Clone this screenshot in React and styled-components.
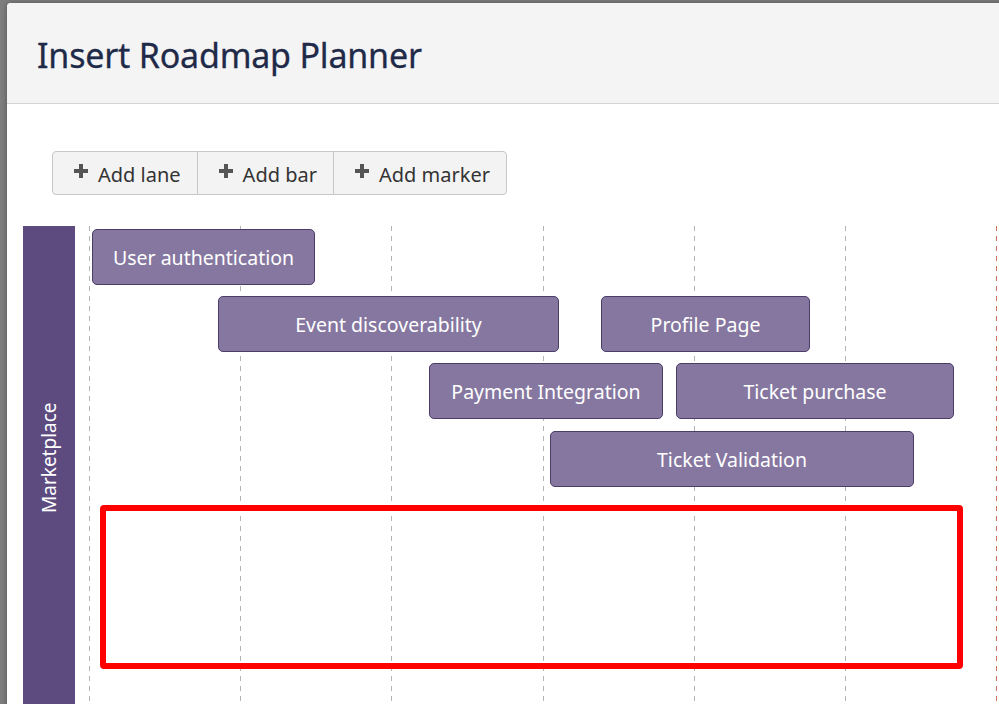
import React from 'react';
import styled, { createGlobalStyle } from 'styled-components';

const GlobalStyle = createGlobalStyle`
    html, body {
        margin: 0;
        padding: 0;
        height: 100%;
        overflow: hidden;
        background: #7f7f7f;
    }
    body {
        font-family: 'Noto Sans', 'Open Sans', sans-serif;
    }
`;

const COL = 151.2;

const bars = [
    { id: 1, title: 'User authentication', left: 17, top: 3, width: 223 },
    { id: 2, title: 'Event discoverability', left: 143, top: 70, width: 341 },
    { id: 3, title: 'Profile Page', left: 526, top: 70, width: 209 },
    { id: 4, title: 'Payment Integration', left: 354, top: 137, width: 234 },
    { id: 5, title: 'Ticket purchase', left: 601, top: 137, width: 278 },
    { id: 6, title: 'Ticket Validation', left: 475, top: 205, width: 364 },
];

const PlusIcon = () => (
    <svg width="16" height="16" viewBox="0 0 16 16">
        <path d="M6 1h4v5h5v4h-5v5H6v-5H1V6h5z" fill="#555" />
    </svg>
);

const App = () => {
    return (
        <>
            <GlobalStyle />
            <Dialog>
                <Header>
                    <Title>Insert Roadmap Planner</Title>
                </Header>
                <Body>
                    <Toolbar>
                        <ToolButton><PlusIcon />Add lane</ToolButton>
                        <ToolButton><PlusIcon />Add bar</ToolButton>
                        <ToolButton><PlusIcon />Add marker</ToolButton>
                    </Toolbar>
                    <Roadmap>
                        <Lane>
                            <LaneTitle>Marketplace</LaneTitle>
                        </Lane>
                        <Timeline>
                            <Grid>
                                {[0, 1, 2, 3, 4, 5].map(i => (
                                    <Column key={i} />
                                ))}
                                <Column $color="#c8745f" />
                            </Grid>
                            {bars.map(bar => (
                                <Bar
                                    key={bar.id}
                                    style={{ left: bar.left, top: bar.top, width: bar.width }}
                                >
                                    {bar.title}
                                </Bar>
                            ))}
                            <Highlight />
                        </Timeline>
                    </Roadmap>
                </Body>
            </Dialog>
        </>
    );
};

const Dialog = styled.div`
    margin: 3px 0 0 7px;
    width: 1010px;
    height: 720px;
    background: #ffffff;
    border-top-left-radius: 4px;
    box-shadow: 0 0 6px rgba(0, 0, 0, 0.35);
    overflow: hidden;
`;

const Header = styled.div`
    height: 100px;
    background: #f4f4f4;
    border-bottom: 1px solid #d4d4d4;
    display: flex;
    align-items: center;
    padding-left: 30px;
    box-sizing: content-box;
`;

const Title = styled.h1`
    margin: 4px 0 0 0;
    font-size: 34px;
    font-weight: 400;
    color: #1f2a48;
    letter-spacing: -0.2px;
    -webkit-text-stroke: 0.3px #1f2a48;
`;

const Body = styled.div`
    padding: 47px 0 0 16px;
`;

const Toolbar = styled.div`
    display: inline-flex;
    margin-left: 29px;
    height: 44px;
    border: 1px solid #c8c8c8;
    border-radius: 4px;
    background: #f3f3f3;
    box-sizing: border-box;
    overflow: hidden;
`;

const ToolButton = styled.div`
    display: flex;
    align-items: center;
    gap: 9px;
    padding: 2px 16px 0 20px;
    font-size: 20px;
    color: #333;
    border-left: 1px solid #c8c8c8;
    svg {
        margin-top: -7px;
    }
    &:first-child {
        border-left: none;
    }
`;

const Roadmap = styled.div`
    display: flex;
    margin-top: 31px;
    height: 500px;
`;

const Lane = styled.div`
    width: 52px;
    flex: none;
    background: #5d4b80;
    display: flex;
    justify-content: center;
    padding-top: 175px;
    box-sizing: border-box;
`;

const LaneTitle = styled.div`
    writing-mode: vertical-rl;
    transform: rotate(180deg);
    color: #ffffff;
    font-size: 19px;
    height: 113px;
    text-align: center;
`;

const Timeline = styled.div`
    flex: 1;
    position: relative;
`;

const Grid = styled.div`
    position: absolute;
    inset: 0;
    display: flex;
    padding-left: 14px;
`;

const Column = styled.div`
    width: ${COL}px;
    flex: none;
    background-image: linear-gradient(
        to bottom,
        ${p => p.$color || '#b4b4b4'} 55%,
        transparent 55%
    );
    background-size: 1px 10px;
    background-repeat: repeat-y;
    background-position: left top;
`;

const Bar = styled.div`
    position: absolute;
    height: 56px;
    box-sizing: border-box;
    background: #85779f;
    border: 1px solid #4a3d68;
    border-radius: 5px;
    color: #ffffff;
    font-size: 19.5px;
    display: flex;
    align-items: center;
    justify-content: center;
    white-space: nowrap;
`;

const Highlight = styled.div`
    position: absolute;
    left: 25px;
    top: 279px;
    width: 863px;
    height: 164px;
    box-sizing: border-box;
    border: 6px solid #ff0000;
    border-radius: 4px;
`;

export default App;
